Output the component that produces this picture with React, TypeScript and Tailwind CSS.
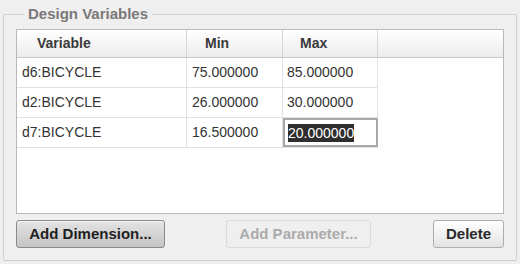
const rows = [
  { name: "d6:BICYCLE", min: "75.000000", max: "85.000000" },
  { name: "d2:BICYCLE", min: "26.000000", max: "30.000000" },
  { name: "d7:BICYCLE", min: "16.500000", max: "20.000000", editing: true },
];

const App = () => {
  return (
    <div
      className="w-[520px] h-[264px] bg-[#efefef] pt-[14px] px-[3px] text-[14px] text-[#333]"
      style={{ fontFamily: '"Liberation Sans", Arial, sans-serif' }}
    >
      {/* Design Variables group */}
      <div className="relative h-[247px] w-[514px] border border-[#d0d0d0] rounded-[2px] pt-[14px] px-[12px] flex flex-col">
        <span className="absolute left-[20px] -top-[10px] bg-[#efefef] px-[4px] text-[15px] font-bold text-[#7a7878] leading-[18px]">
          Design Variables
        </span>

        {/* Table */}
        <div className="h-[185px] border border-[#b9b9b9] bg-white flex flex-col">
          <div className="flex h-[28px] border-b border-[#c8c8c8] bg-gradient-to-b from-white to-[#ececec] font-bold text-[#3a3a3a]">
            <div className="w-[170px] border-r border-[#d6d6d6] pl-[20px] flex items-center">Variable</div>
            <div className="w-[96px] border-r border-[#d6d6d6] pl-[18px] flex items-center">Min</div>
            <div className="w-[95px] border-r border-[#d6d6d6] pl-[17px] flex items-center">Max</div>
            <div className="flex-1" />
          </div>
          {rows.map((r) => (
            <div key={r.name} className="flex h-[30px]">
              <div className="w-[361px] flex border-b border-[#e2e2e2]">
                <div className="w-[170px] border-r border-[#e2e2e2] pl-[5px] flex items-center">{r.name}</div>
                <div className="w-[96px] border-r border-[#e2e2e2] pl-[5px] flex items-center">{r.min}</div>
                {r.editing ? (
                  <div className="w-[95px] border-2 border-[#a8a8a8] pl-[3px] flex items-center">
                    <span className="bg-[#2e2e2e] text-white leading-[18px]">{r.max}</span>
                  </div>
                ) : (
                  <div className="w-[95px] border-r border-[#e2e2e2] pl-[4px] flex items-center">{r.max}</div>
                )}
              </div>
              <div className="flex-1" />
            </div>
          ))}
        </div>

        {/* Buttons */}
        <div className="mt-[6px] flex items-center h-[28px]">
          <button className="w-[149px] h-[28px] rounded-[3px] border border-[#8a8a8a] bg-gradient-to-b from-[#e4e4e4] to-[#c4c4c4] font-bold text-[15px] text-[#1f1f1f] shadow-[inset_0_1px_0_#f4f4f4]">
            Add Dimension...
          </button>
          <button
            disabled
            className="ml-[61px] w-[145px] h-[28px] rounded-[3px] border border-[#dadada] bg-[#efefef] font-bold text-[15px] text-[#ababab]"
          >
            Add Parameter...
          </button>
          <button className="ml-auto w-[71px] h-[28px] rounded-[3px] border border-[#adadad] bg-gradient-to-b from-white to-[#e3e3e3] font-bold text-[15px] text-[#2a2a2a]">
            Delete
          </button>
        </div>
      </div>
    </div>
  );
};

export default App;
